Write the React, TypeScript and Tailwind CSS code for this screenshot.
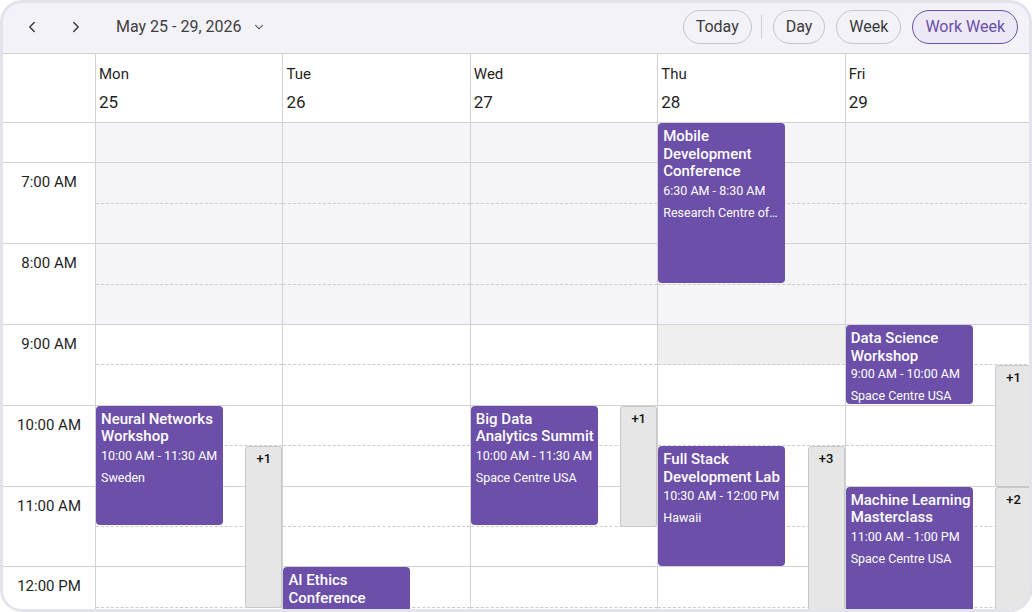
import { ChevronLeft, ChevronRight, ChevronDown } from "lucide-react";

const SLOT = 40.4;

type CalEvent = {
  title: string;
  time: string;
  location: string;
  start: number; // half-hour slots from 6:30 AM
  span: number;
};

type More = { label: string; start: number; span: number };

type Day = {
  name: string;
  date: number;
  events: CalEvent[];
  more: More[];
  highlight?: number;
};

const days: Day[] = [
  {
    name: "Mon",
    date: 25,
    events: [
      {
        title: "Neural Networks Workshop",
        time: "10:00 AM - 11:30 AM",
        location: "Sweden",
        start: 7,
        span: 3,
      },
    ],
    more: [{ label: "+1", start: 8, span: 4 }],
  },
  {
    name: "Tue",
    date: 26,
    events: [
      {
        title: "AI Ethics Conference",
        time: "12:00 PM - 1:30 PM",
        location: "Berlin",
        start: 11,
        span: 3,
      },
    ],
    more: [],
  },
  {
    name: "Wed",
    date: 27,
    events: [
      {
        title: "Big Data Analytics Summit",
        time: "10:00 AM - 11:30 AM",
        location: "Space Centre USA",
        start: 7,
        span: 3,
      },
    ],
    more: [{ label: "+1", start: 7, span: 3 }],
  },
  {
    name: "Thu",
    date: 28,
    highlight: 5,
    events: [
      {
        title: "Mobile Development Conference",
        time: "6:30 AM - 8:30 AM",
        location: "Research Centre of Innovation",
        start: 0,
        span: 4,
      },
      {
        title: "Full Stack Development Lab",
        time: "10:30 AM - 12:00 PM",
        location: "Hawaii",
        start: 8,
        span: 3,
      },
    ],
    more: [{ label: "+3", start: 8, span: 5 }],
  },
  {
    name: "Fri",
    date: 29,
    events: [
      {
        title: "Data Science Workshop",
        time: "9:00 AM - 10:00 AM",
        location: "Space Centre USA",
        start: 5,
        span: 2,
      },
      {
        title: "Machine Learning Masterclass",
        time: "11:00 AM - 1:00 PM",
        location: "Space Centre USA",
        start: 9,
        span: 4,
      },
    ],
    more: [
      { label: "+1", start: 6, span: 3 },
      { label: "+2", start: 9, span: 4 },
    ],
  },
];

const hours = ["7:00 AM", "8:00 AM", "9:00 AM", "10:00 AM", "11:00 AM", "12:00 PM"];
const slots = Array.from({ length: 13 }, (_, i) => i);

function Pill({ label, active }: { label: string; active?: boolean }) {
  return (
    <button
      className={
        active
          ? "h-[34px] px-[12px] rounded-full border border-[#6b4fa9] bg-[#ece8f6] text-[16px] text-[#6b4fa9]"
          : "h-[34px] px-[12px] rounded-full border border-[#c6c6c6] text-[16px] text-[#3a3a3a]"
      }
    >
      {label}
    </button>
  );
}

function DayColumn({ day }: { day: Day }) {
  return (
    <div className="relative flex-1 border-l border-[#d2d2d2]">
      {slots.map((i) => (
        <div
          key={i}
          className={[
            "box-border h-[40.4px] border-b",
            i % 2 === 0 ? "border-solid border-[#d2d2d2]" : "border-dashed border-[#cdcdcd]",
            i === day.highlight ? "bg-[#efefef]" : i < 5 ? "bg-[#f5f5f9]" : "bg-white",
          ].join(" ")}
        />
      ))}

      {day.events.map((ev) => (
        <div
          key={ev.title}
          className="absolute left-0 w-[127px] rounded-[4px] bg-[#6b4fa9] text-white pl-[5px] pr-[1px] pt-[5px] flex flex-col overflow-hidden"
          style={{ top: ev.start * SLOT, height: ev.span * SLOT - 1.5 }}
        >
          <div className="min-h-0 overflow-hidden text-[15px] font-medium leading-[17.5px]">
            {ev.title}
          </div>
          <div className="shrink-0 mt-[2px] text-[12.5px] leading-[16px]">{ev.time}</div>
          <div className="shrink-0 mt-[6px] pr-[4px] text-[12.5px] leading-[16px] truncate">{ev.location}</div>
        </div>
      ))}

      {day.more.map((m) => (
        <div
          key={m.label + m.start}
          className="absolute right-0 w-[37px] rounded-[3px] border border-[#c8c8c8] bg-[#e6e6e6] pt-[2px] text-center text-[13px] font-medium text-[#111]"
          style={{ top: m.start * SLOT, height: m.span * SLOT }}
        >
          {m.label}
        </div>
      ))}
    </div>
  );
}

export default function App() {
  return (
    <div
      className="relative w-[1032px] h-[612px] overflow-hidden rounded-[22px] bg-[#f3f2f8] flex flex-col"
      style={{ fontFamily: "Roboto, 'Liberation Sans', sans-serif" }}
    >
      {/* Toolbar */}
      <div className="h-[54px] shrink-0 flex items-center border-b border-[#d2d2d2] pr-[14px]">
        <div className="flex items-center text-[#333]">
          <button className="w-[44px] flex justify-center ml-[10px]">
            <ChevronLeft size={18} strokeWidth={1.8} />
          </button>
          <button className="w-[44px] flex justify-center">
            <ChevronRight size={18} strokeWidth={1.8} />
          </button>
          <div className="ml-[18px] flex items-center gap-[10px] text-[16px] text-[#404040]">
            <span>May 25 - 29, 2026</span>
            <ChevronDown size={14} strokeWidth={1.8} />
          </div>
        </div>
        <div className="ml-auto flex items-center">
          <Pill label="Today" />
          <div className="ml-[9px] mr-[11px] h-[24px] w-px bg-[#cfcfcf]" />
          <div className="flex items-center gap-[11px]">
            <Pill label="Day" />
            <Pill label="Week" />
            <Pill label="Work Week" active />
          </div>
        </div>
      </div>

      {/* Day headers */}
      <div className="h-[69px] shrink-0 flex bg-white border-b border-[#d2d2d2]">
        <div className="w-[95px] shrink-0" />
        {days.map((d) => (
          <div key={d.name} className="flex-1 border-l border-[#d2d2d2] pl-[3px] pt-[10px] text-[#1f1f1f]">
            <div className="text-[15px] leading-[20px]">{d.name}</div>
            <div className="mt-[7px] text-[17px] leading-[22px]">{d.date}</div>
          </div>
        ))}
      </div>

      {/* Time grid */}
      <div className="flex-1 min-h-0 flex bg-white overflow-hidden">
        <div className="w-[95px] shrink-0">
          <div className="box-border h-[40.4px] border-b border-[#d2d2d2]" />
          {hours.map((h) => (
            <div
              key={h}
              className="box-border h-[80.8px] border-b border-[#d2d2d2] pl-[3px] pt-[9px] text-center text-[15px] leading-[20px] text-[#1f1f1f]"
            >
              {h}
            </div>
          ))}
        </div>
        {days.map((d) => (
          <DayColumn key={d.name} day={d} />
        ))}
      </div>

      {/* Rounded frame drawn over the edges */}
      <div className="pointer-events-none absolute inset-0 rounded-[22px] border-[3px] border-[#e3e3eb]" />
    </div>
  );
}
